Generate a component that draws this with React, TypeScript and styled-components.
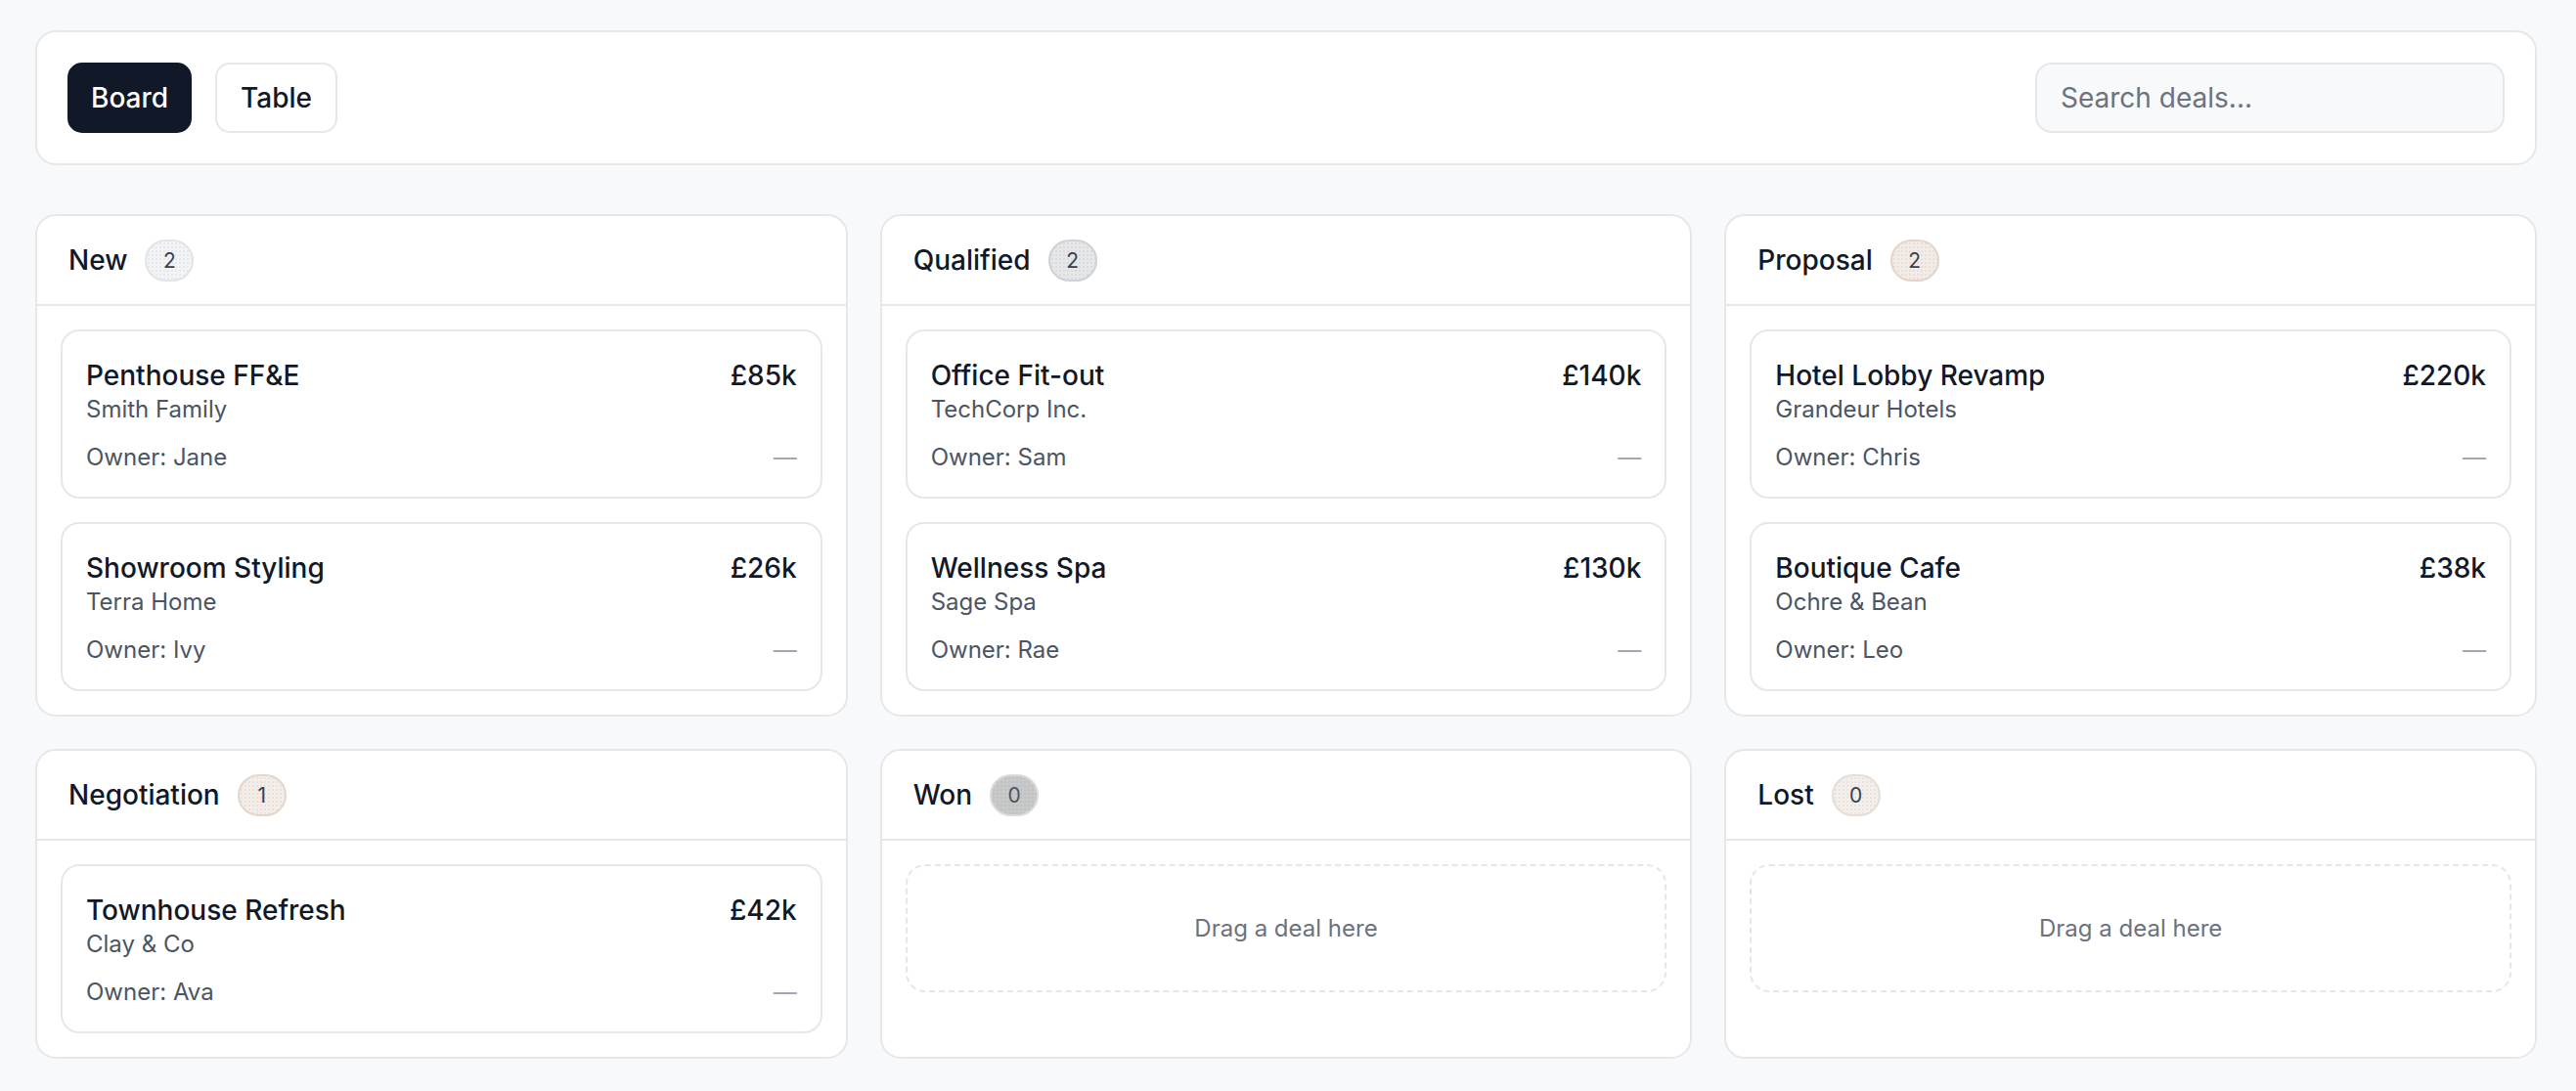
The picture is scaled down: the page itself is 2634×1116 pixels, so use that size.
import React from "react";
import styled, { createGlobalStyle, css } from "styled-components";

const Global = createGlobalStyle`
  * { box-sizing: border-box; }
  html, body { margin: 0; padding: 0; background: #f8f9fb; }
  body { font-family: Inter, "Noto Sans", "Liberation Sans", sans-serif; color: #111827; }
`;

const Page = styled.div`
  padding: 31px 40px 35px 36px;
  min-height: 1116px;
`;

const Toolbar = styled.div`
  display: flex;
  align-items: center;
  justify-content: space-between;
  background: #fff;
  border: 2px solid #e6e7eb;
  border-radius: 21px;
  padding: 31px;
`;

const ViewTabs = styled.div`
  display: flex;
  gap: 24px;
`;

const ViewButton = styled.button<{ $active?: boolean }>`
  height: 72px;
  padding: 0 22px;
  border-radius: 15px;
  font-family: inherit;
  font-size: 28px;
  font-weight: 500;
  cursor: pointer;
  ${(p) =>
    p.$active
      ? css`
          background: #111827;
          color: #fff;
          border: 2px solid #111827;
        `
      : css`
          background: #fff;
          color: #111827;
          border: 2px solid #e6e7eb;
          padding: 0 24px;
        `}
`;

const Search = styled.input`
  width: 480px;
  height: 72px;
  border-radius: 17px;
  border: 2px solid #e6e7eb;
  background: #f8f9fb;
  padding: 0 24px;
  font-family: inherit;
  font-size: 28px;
  color: #111827;
  outline: none;
  &::placeholder { color: #6b7280; }
`;

const Board = styled.div`
  margin-top: 50px;
  display: grid;
  grid-template-columns: repeat(3, 1fr);
  gap: 33px;
`;

const Column = styled.section`
  background: #fff;
  border: 2px solid #e6e7eb;
  border-radius: 21px;
  display: flex;
  flex-direction: column;
`;

const ColumnHeader = styled.div`
  height: 92px;
  display: flex;
  align-items: center;
  gap: 18px;
  padding: 0 32px;
  border-bottom: 2px solid #e6e7eb;
`;

const ColumnTitle = styled.h2`
  margin: 0;
  font-size: 28px;
  font-weight: 500;
  color: #111827;
`;

type Tone = "light" | "mid" | "beige" | "sand" | "dark" | "pale";

const tones: Record<Tone, { bg: string; border: string; color: string }> = {
  light: { bg: "#f3f4f6", border: "#e3e4e8", color: "#374151" },
  mid: { bg: "#e6e7e9", border: "#cfd1d5", color: "#374151" },
  beige: { bg: "#f3ece6", border: "#e2d5cb", color: "#374151" },
  sand: { bg: "#f5eee8", border: "#e3d6cc", color: "#374151" },
  dark: { bg: "#c8cac9", border: "#d9dbdd", color: "#4b5563" },
  pale: { bg: "#f4efeb", border: "#e6ded7", color: "#374151" },
};

const Badge = styled.span<{ $tone: Tone }>`
  display: inline-flex;
  align-items: center;
  justify-content: center;
  min-width: 50px;
  height: 43px;
  padding: 0 16px;
  border-radius: 999px;
  font-size: 21px;
  font-weight: 400;
  background-color: ${(p) => tones[p.$tone].bg};
  background-image: radial-gradient(rgba(0, 0, 0, 0.05) 0.7px, transparent 0.9px);
  background-size: 4px 4px;
  border: 2px solid ${(p) => tones[p.$tone].border};
  color: ${(p) => tones[p.$tone].color};
`;

const ColumnBody = styled.div`
  padding: 24px;
  display: flex;
  flex-direction: column;
  gap: 24px;
  flex: 1;
`;

const DealCard = styled.article`
  border: 2px solid #e6e7eb;
  border-radius: 19px;
  background: #fff;
  padding: 27px 24px 24px;
`;

const Row = styled.div`
  display: flex;
  justify-content: space-between;
  align-items: baseline;
`;

const DealTitle = styled.div`
  font-size: 28px;
  line-height: 36px;
  font-weight: 500;
  color: #111827;
`;

const Amount = styled.div`
  font-size: 28px;
  line-height: 36px;
  font-weight: 500;
  color: #111827;
`;

const Client = styled.div`
  margin-top: 1px;
  font-size: 24px;
  line-height: 32px;
  color: #4b5563;
`;

const OwnerRow = styled(Row)`
  margin-top: 17px;
`;

const Owner = styled.div`
  font-size: 24px;
  line-height: 32px;
  color: #4b5563;
`;

const Dash = styled.span`
  font-size: 24px;
  line-height: 32px;
  color: #a3a8b0;
`;

const DropZone = styled.div`
  height: 131px;
  border: 2px dashed #e4e6ea;
  border-radius: 20px;
  display: flex;
  align-items: center;
  justify-content: center;
  font-size: 24px;
  color: #6b7280;
`;

type Deal = { title: string; client: string; owner: string; amount: string };
type Stage = { name: string; tone: Tone; deals: Deal[] };

const stages: Stage[] = [
  {
    name: "New",
    tone: "light",
    deals: [
      { title: "Penthouse FF&E", client: "Smith Family", owner: "Jane", amount: "£85k" },
      { title: "Showroom Styling", client: "Terra Home", owner: "Ivy", amount: "£26k" },
    ],
  },
  {
    name: "Qualified",
    tone: "mid",
    deals: [
      { title: "Office Fit-out", client: "TechCorp Inc.", owner: "Sam", amount: "£140k" },
      { title: "Wellness Spa", client: "Sage Spa", owner: "Rae", amount: "£130k" },
    ],
  },
  {
    name: "Proposal",
    tone: "beige",
    deals: [
      { title: "Hotel Lobby Revamp", client: "Grandeur Hotels", owner: "Chris", amount: "£220k" },
      { title: "Boutique Cafe", client: "Ochre & Bean", owner: "Leo", amount: "£38k" },
    ],
  },
  {
    name: "Negotiation",
    tone: "sand",
    deals: [{ title: "Townhouse Refresh", client: "Clay & Co", owner: "Ava", amount: "£42k" }],
  },
  { name: "Won", tone: "dark", deals: [] },
  { name: "Lost", tone: "pale", deals: [] },
];

export default function App() {
  return (
    <>
      <Global />
      <Page>
        <Toolbar>
          <ViewTabs>
            <ViewButton $active>Board</ViewButton>
            <ViewButton>Table</ViewButton>
          </ViewTabs>
          <Search placeholder="Search deals..." />
        </Toolbar>
        <Board>
          {stages.map((s) => (
            <Column key={s.name}>
              <ColumnHeader>
                <ColumnTitle>{s.name}</ColumnTitle>
                <Badge $tone={s.tone}>{s.deals.length}</Badge>
              </ColumnHeader>
              <ColumnBody>
                {s.deals.length === 0 ? (
                  <DropZone>Drag a deal here</DropZone>
                ) : (
                  s.deals.map((d) => (
                    <DealCard key={d.title}>
                      <Row>
                        <DealTitle>{d.title}</DealTitle>
                        <Amount>{d.amount}</Amount>
                      </Row>
                      <Client>{d.client}</Client>
                      <OwnerRow>
                        <Owner>Owner: {d.owner}</Owner>
                        <Dash>—</Dash>
                      </OwnerRow>
                    </DealCard>
                  ))
                )}
              </ColumnBody>
            </Column>
          ))}
        </Board>
      </Page>
    </>
  );
}
